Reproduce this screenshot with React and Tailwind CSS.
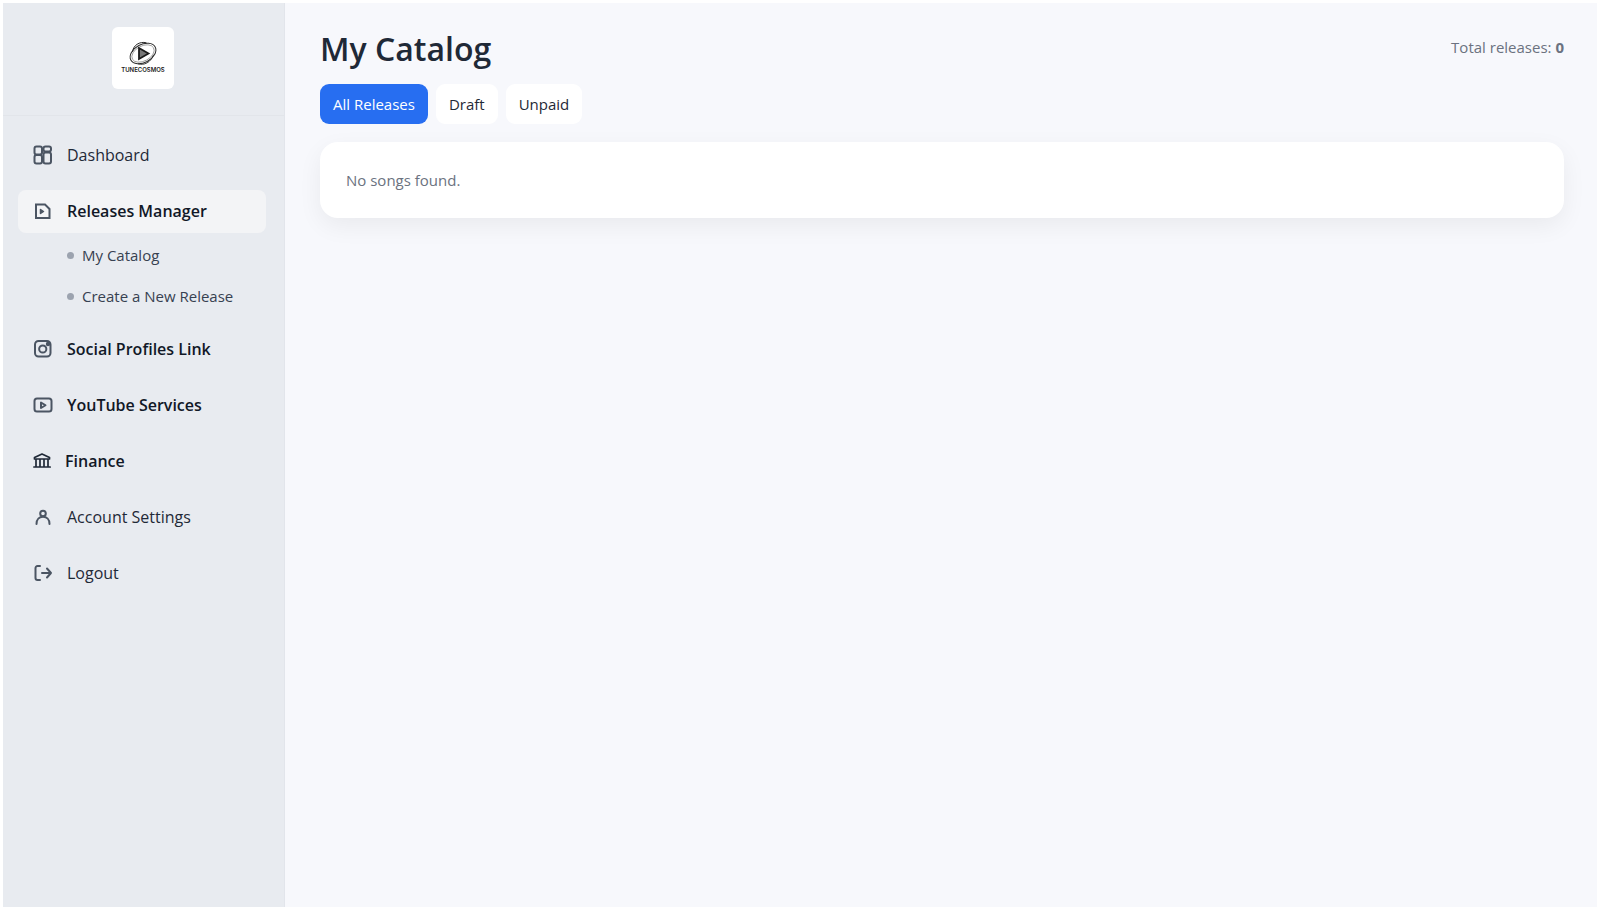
import { useState } from 'react'

const stroke = {
  fill: 'none',
  stroke: 'currentColor',
  strokeWidth: 2,
  strokeLinecap: 'round',
  strokeLinejoin: 'round',
}

function Icon({ children }) {
  return (
    <svg viewBox="0 0 20 20" className="h-5 w-5 shrink-0" aria-hidden="true" {...stroke}>
      {children}
    </svg>
  )
}

const icons = {
  dashboard: (
    <>
      <rect x="1.5" y="1.5" width="7.5" height="8" rx="2" />
      <rect x="10.5" y="1.5" width="7.5" height="5" rx="2" />
      <rect x="1.5" y="10" width="7.5" height="8.5" rx="2" />
      <rect x="10.5" y="7.5" width="7.5" height="11" rx="2" />
    </>
  ),
  releases: (
    <>
      <path d="M3 3.5h9l4.5 4.5v9H3z" strokeLinejoin="miter" />
      <path d="M7.5 8.5v4l3-2z" fill="currentColor" strokeWidth="1.5" />
    </>
  ),
  social: (
    <>
      <rect x="2" y="2" width="15.5" height="15.5" rx="3.5" />
      <circle cx="9.75" cy="10" r="3.6" />
      <circle cx="15" cy="5" r="1.2" fill="currentColor" />
    </>
  ),
  youtube: (
    <>
      <rect x="1.5" y="3.5" width="17" height="13" rx="2.5" />
      <path d="M8 7.5v5.5l4.5-2.75z" />
    </>
  ),
  finance: (
    <path
      d="M1.5 6.5 9 3l7.5 3.5v1.5h-15zM.8 16h16.4M3 8.5V16M7 8.5V16M11 8.5V16M15 8.5V16"
      strokeWidth="1.7"
    />
  ),
  account: (
    <>
      <circle cx="10" cy="6.5" r="2.8" />
      <path d="M3.5 17c0-4.5 2.8-7.2 6.5-7.2s6.5 2.7 6.5 7.2" />
    </>
  ),
  logout: <path d="M7 3H4.5a2 2 0 0 0-2 2v10a2 2 0 0 0 2 2H7M9 10h9M14 5.5l4 4.500-4 4.500" />,
}

const navItems = [
  { id: 'dashboard', label: 'Dashboard' },
  {
    id: 'releases',
    label: 'Releases Manager',
    strong: true,
    active: true,
    children: ['My Catalog', 'Create a New Release'],
  },
  { id: 'social', label: 'Social Profiles Link', strong: true },
  { id: 'youtube', label: 'YouTube Services', strong: true },
  { id: 'finance', label: 'Finance', strong: true, tight: true },
  { id: 'account', label: 'Account Settings' },
  { id: 'logout', label: 'Logout' },
]

function Logo() {
  return (
    <svg viewBox="0 0 62 62" className="h-[62px] w-[62px] rounded-md bg-white" role="img" aria-label="Tunecosmos">
      <g fill="none" stroke="#2b2b2b">
        <path d="M20.500 25c.5-6.500 7-11 14-9.200" strokeWidth="1" />
        <path d="M26 36.800c6 2 13-1.500 15.500-9" strokeWidth="0.900" />
        <ellipse cx="31" cy="26.500" rx="13.800" ry="9" transform="rotate(-28 31 26.500)" strokeWidth="1" />
        <ellipse cx="31" cy="26.500" rx="12" ry="7.500" transform="rotate(-28 31 26.500)" strokeWidth="0.400" />
      </g>
      <path d="M27 21v11l9.500-5.500z" fill="#777" stroke="#1c1c1c" strokeWidth="1.800" />
      <text
        x="31"
        y="45"
        textAnchor="middle"
        fontSize="6"
        fontWeight="600"
        fill="#222"
        className="font-['Inter',sans-serif]"
      >
        TUNECOSMOS
      </text>
    </svg>
  )
}

function NavItem({ item }) {
  return (
    <li>
      <a
        href={`#${item.id}`}
        className={`flex h-[43px] items-center rounded-lg px-[15px] pb-px ${item.tight ? 'gap-3' : 'gap-[14px]'} ${
          item.active ? 'bg-[#f3f4f6]' : ''
        }`}
      >
        <span className={item.tight ? 'text-[#1f2937]' : 'text-[#4b5563]'}>
          <Icon>{icons[item.id]}</Icon>
        </span>
        <span className={item.strong ? 'font-semibold text-[#111827]' : 'text-[#1f2937]'}>{item.label}</span>
      </a>
      {item.children && (
        <ul className="flex flex-col gap-1 pt-1">
          {item.children.map((label) => (
            <li key={label}>
              <a href="#catalog" className="flex h-[37px] items-center gap-2 pl-[49px] text-[15px] text-[#374151]">
                <span className="h-[7px] w-[7px] rounded-full bg-[#9ca3af]" />
                {label}
              </a>
            </li>
          ))}
        </ul>
      )}
    </li>
  )
}

function Sidebar() {
  return (
    <aside className="w-[282px] shrink-0 border-r border-[#e2e5eb] bg-[#e8ebf0]">
      <div className="flex h-[113px] items-start justify-center border-b border-[#e2e5ea] pt-6 pr-[2px]">
        <Logo />
      </div>
      <nav className="pr-[18px] pl-[15px] pt-[18px]">
        <ul className="flex flex-col gap-[13px] text-base">
          {navItems.map((item) => (
            <NavItem key={item.id} item={item} />
          ))}
        </ul>
      </nav>
    </aside>
  )
}

const tabs = ['All Releases', 'Draft', 'Unpaid']

function Catalog() {
  const [tab, setTab] = useState('All Releases')

  return (
    <main className="min-w-0 flex-1 pt-6 pr-[33px] pl-[35px]">
      <header className="flex items-start justify-between">
        <h1 className="text-[32px] leading-[44px] font-semibold text-[#1f2937]">My Catalog</h1>
        <p className="pt-2 text-[15px] leading-6 text-[#6b7280]">
          Total releases: <strong className="font-bold">0</strong>
        </p>
      </header>

      <div className="mt-[13px] flex gap-2">
        {tabs.map((name) => (
          <button
            key={name}
            type="button"
            onClick={() => setTab(name)}
            className={`h-10 rounded-[9px] px-[13px] text-[15px] ${
              tab === name ? 'bg-[#276ef1] text-white' : 'bg-white text-[#1f2937]'
            }`}
          >
            {name}
          </button>
        ))}
      </div>

      <section className="mt-[18px] rounded-[18px] bg-white px-[26px] py-[26px] text-[15px] leading-6 text-[#6b7280] shadow-[0_8px_24px_rgba(0,0,0,0.06)]">
        No songs found.
      </section>
    </main>
  )
}

export default function App() {
  return (
    <div className="min-h-screen bg-white p-[3px] font-['Open_Sans','Noto_Sans',sans-serif]">
      <div className="flex min-h-[calc(100vh-6px)] bg-[#f7f8fc]">
        <Sidebar />
        <Catalog />
      </div>
    </div>
  )
}
